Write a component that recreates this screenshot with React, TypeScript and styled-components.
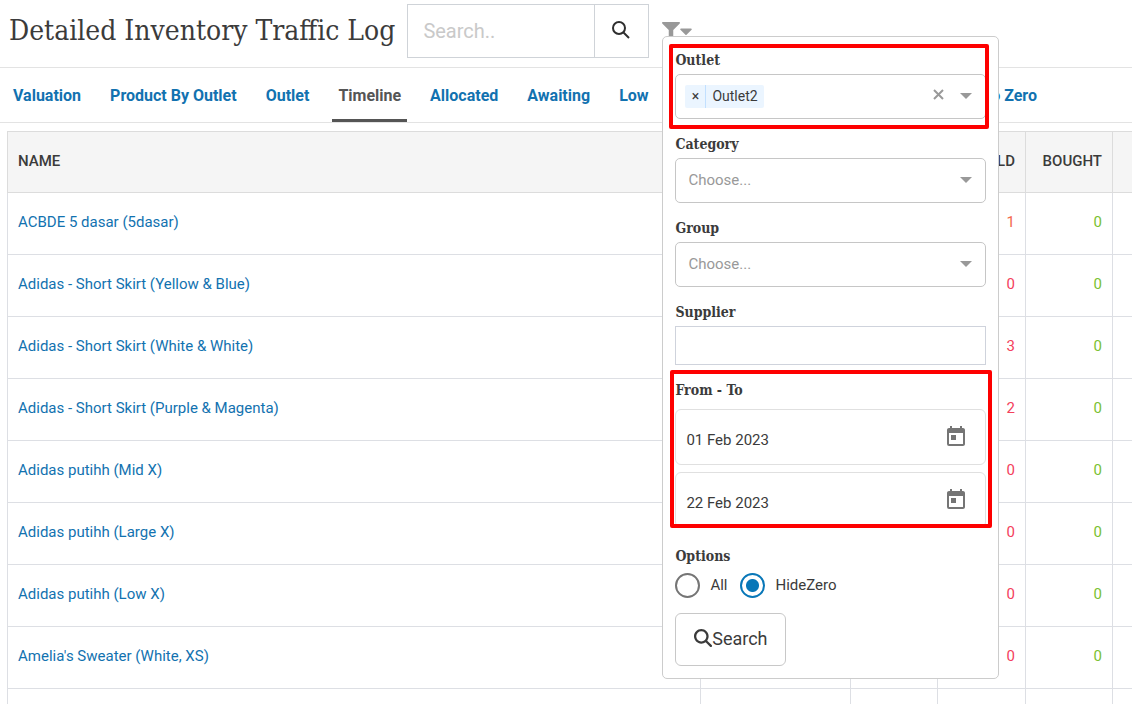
import React from "react";
import styled, { createGlobalStyle, css } from "styled-components";
import { FaFilter, FaCaretDown } from "react-icons/fa";
import { FaMagnifyingGlass } from "react-icons/fa6";
import { MdToday } from "react-icons/md";

const sans = `Roboto, "Liberation Sans", sans-serif`;
const slab = `"Roboto Slab", "DejaVu Serif Condensed", "DejaVu Serif", serif`;

const GlobalStyle = createGlobalStyle`
  *, *::before, *::after { box-sizing: border-box; }
  body { margin: 0; background: #fff; color: #3b3b3b; font-family: ${sans}; font-size: 15px; }
  button, input, select { font: inherit; color: inherit; margin: 0; }
  button { cursor: pointer; }
  a { text-decoration: none; }
`;

const Page = styled.div`
  height: 100vh;
  overflow: hidden;
`;

const Header = styled.header`
  display: flex;
  align-items: center;
  height: 68px;
  padding: 0 9px 6px;
  border-bottom: 1px solid #e3e3e3;
`;

const Title = styled.h1`
  margin: 0 12px 0 0;
  font-family: ${slab};
  font-size: 28px;
  line-height: 36px;
  font-weight: 400;
  white-space: nowrap;
`;

const SearchBox = styled.form`
  display: flex;
  height: 54px;
  flex: none;
  border: 1px solid #cfd3d8;
`;

const SearchInput = styled.input`
  width: 186px;
  padding: 0 15px;
  border: 0;
  outline: 0;
  font-size: 20px;
  &::placeholder { color: #c9c9c9; opacity: 1; }
`;

const SearchSubmit = styled.button`
  display: flex;
  align-items: center;
  justify-content: center;
  width: 54px;
  padding: 0 2px 2px 0;
  border: 0;
  border-left: 1px solid #cfd3d8;
  background: #fff;
  color: #2e2e2e;
`;

const FilterMenu = styled.div`
  position: relative;
  margin-left: 13px;
`;

const FilterToggle = styled.button`
  display: flex;
  align-items: center;
  padding: 0;
  border: 0;
  background: none;
  color: #999;
  font-size: 18px;
`;

const ToggleCaret = styled(FaCaretDown)`
  margin-left: -4px;
  font-size: 20px;
`;

const Popup = styled.form`
  position: absolute;
  z-index: 2;
  top: 15px;
  left: 0;
  width: 337px;
  padding: 11px 12px 12px;
  border: 1px solid #ccc;
  border-radius: 5px;
  background: #fff;
`;

const Group = styled.div<{ $space?: number; $mark?: string }>`
  position: relative;
  margin-bottom: ${(p) => p.$space ?? 13}px;
  ${(p) =>
    p.$mark &&
    css`
      &::after {
        content: "";
        position: absolute;
        inset: ${p.$mark};
        border: 4px solid #fe0000;
        border-radius: 2px;
        pointer-events: none;
      }
    `}
`;

const labelText = css`
  display: block;
  font-family: ${slab};
  font-size: 14px;
  line-height: 24px;
  font-weight: 700;
`;
const Label = styled.label`${labelText}`;
const GroupTitle = styled.div`${labelText}`;

const SelectFrame = styled.div`
  display: flex;
  align-items: center;
  position: relative;
  height: 45px;
  margin-top: 2px;
  border: 1px solid #c6c6c6;
  border-radius: 5px;
`;

const Select = styled.select`
  appearance: none;
  width: 100%;
  height: 100%;
  padding: 0 40px 0 12px;
  border: 0;
  outline: 0;
  background: none;
  color: #999;
`;

const Arrow = styled.svg`
  position: absolute;
  right: 13px;
  top: 18px;
  width: 12px;
  height: 6px;
  fill: #999;
  pointer-events: none;
`;

const Chip = styled.span`
  display: flex;
  height: 23px;
  margin-left: 9px;
  border-radius: 2px;
  background: #ebf5ff;
  font-size: 14px;
  line-height: 23px;
`;

const ChipRemove = styled.button`
  width: 21px;
  padding: 0;
  border: 0;
  border-right: 1px solid #c2e0ff;
  background: none;
`;

const ChipText = styled.span`
  padding: 0 6px;
`;

const ClearButton = styled.button`
  display: flex;
  margin: 0 41px 4px auto;
  padding: 0;
  border: 0;
  background: none;
  color: #999;
`;

const TextInput = styled.input`
  display: block;
  width: 100%;
  height: 39px;
  margin-top: 2px;
  padding: 0 10px;
  border: 1px solid #cfd3dc;
  outline: 0;
`;

const DateField = styled.div`
  display: flex;
  align-items: center;
  height: 56px;
  margin-top: 7px;
  padding: 0 17px 0 10px;
  border: 1px solid #e0e0e0;
  border-radius: 6px;
`;

const DateInput = styled.input`
  flex: 1;
  min-width: 0;
  padding: 6px 0 0;
  border: 0;
  outline: 0;
`;

const CalendarButton = styled.button`
  display: flex;
  padding: 0;
  border: 0;
  background: none;
  color: #757575;
  font-size: 24px;
`;

const Radios = styled.div`
  display: flex;
  align-items: center;
  height: 25px;
  margin-top: 5px;
`;

const Radio = styled.input`
  appearance: none;
  width: 25px;
  height: 25px;
  margin: 0 10px 0 0;
  border: 2px solid #757575;
  border-radius: 50%;
  &:checked {
    border-color: #0877b8;
    background: radial-gradient(circle, #0877b8 6px, transparent 7px);
  }
`;

const RadioLabel = styled.label`
  display: flex;
  align-items: center;
  margin-right: 13px;
`;

const SearchButton = styled.button`
  display: flex;
  align-items: center;
  justify-content: center;
  width: 111px;
  height: 53px;
  padding: 0 0 2px;
  border: 1px solid #c8c8c8;
  border-radius: 6px;
  background: #fff;
  font-size: 18px;
`;

const Tabs = styled.nav`
  display: flex;
  gap: 17px;
  height: 55px;
  padding: 0 89px 0 7px;
  border-bottom: 1px solid #e3e3e3;
  white-space: nowrap;
`;

const Tab = styled.a<{ $active?: boolean }>`
  padding: 0 6px;
  border-bottom: 3px solid ${(p) => (p.$active ? "#555" : "transparent")};
  color: ${(p) => (p.$active ? "#555" : "#1272b0")};
  font-size: 16px;
  line-height: 55px;
  font-weight: 700;
  &:last-child { margin-left: auto; }
`;

const TableArea = styled.main`
  padding: 8px 0 0 7px;
  overflow: hidden;
`;

const Table = styled.table`
  width: calc(100% + 69px);
  table-layout: fixed;
  border-collapse: collapse;
`;

const Col = styled.col<{ $width?: number }>`
  width: ${(p) => (p.$width ? `${p.$width}px` : "auto")};
`;

const HeadCell = styled.th<{ $right?: boolean }>`
  height: 61px;
  padding: 0 10px 2px;
  border: 1px solid #dcdcdc;
  background: #f5f5f5;
  font-size: 15px;
  font-weight: 500;
  text-align: ${(p) => (p.$right ? "right" : "left")};
`;

const Cell = styled.td<{ $color?: string }>`
  height: 62px;
  padding: 0 10px 3px;
  border: 1px solid #dddfe4;
  color: ${(p) => p.$color ?? "inherit"};
  text-align: right;
  &:first-child { text-align: left; }
`;

const ProductLink = styled.a`
  color: #1272b0;
`;

const tabs = ["Valuation", "Product By Outlet", "Outlet", "Timeline", "Allocated", "Awaiting", "Low", "To Zero"];

const rows: [string, number][] = [
  ["ACBDE 5 dasar (5dasar)", 1],
  ["Adidas - Short Skirt (Yellow & Blue)", 0],
  ["Adidas - Short Skirt (White & White)", 3],
  ["Adidas - Short Skirt (Purple & Magenta)", 2],
  ["Adidas putihh (Mid X)", 0],
  ["Adidas putihh (Large X)", 0],
  ["Adidas putihh (Low X)", 0],
  ["Amelia's Sweater (White, XS)", 0],
  ["", 0],
];

const DropArrow = () => (
  <Arrow viewBox="0 0 12 6" aria-hidden="true">
    <path d="M0 0h12L6 6z" />
  </Arrow>
);

const ChooseField = ({ id, label }: { id: string; label: string }) => (
  <Group>
    <Label htmlFor={id}>{label}</Label>
    <SelectFrame>
      <Select id={id} defaultValue="">
        <option value="">Choose...</option>
      </Select>
      <DropArrow />
    </SelectFrame>
  </Group>
);

const DatePick = ({ label, value }: { label: string; value: string }) => (
  <DateField>
    <DateInput aria-label={label} defaultValue={value} />
    <CalendarButton type="button" aria-label={`${label} calendar`}>
      <MdToday />
    </CalendarButton>
  </DateField>
);

const FilterForm = () => (
  <Popup>
    <Group $mark="-4px -3px -10px -6px" role="group" aria-labelledby="outlet-label">
      <GroupTitle id="outlet-label">Outlet</GroupTitle>
      <SelectFrame>
        <Chip>
          <ChipRemove type="button" aria-label="Remove Outlet2">×</ChipRemove>
          <ChipText>Outlet2</ChipText>
        </Chip>
        <ClearButton type="button" aria-label="Clear outlets">
          <svg width="11" height="11" viewBox="0 0 11 11" stroke="currentColor" strokeWidth="2" aria-hidden="true">
            <path d="M1 1l9 9M10 1l-9 9" />
          </svg>
        </ClearButton>
        <DropArrow />
      </SelectFrame>
    </Group>
    <ChooseField id="category" label="Category" />
    <ChooseField id="group" label="Group" />
    <Group>
      <Label htmlFor="supplier">Supplier</Label>
      <TextInput id="supplier" />
    </Group>
    <Group $space={16} $mark="-8px -6px 0 -5px" role="group" aria-labelledby="range-label">
      <GroupTitle id="range-label">From - To</GroupTitle>
      <DatePick label="From" value="01 Feb 2023" />
      <DatePick label="To" value="22 Feb 2023" />
    </Group>
    <Group $space={15} role="radiogroup" aria-labelledby="options-label">
      <GroupTitle id="options-label">Options</GroupTitle>
      <Radios>
        <RadioLabel>
          <Radio type="radio" name="options" />
          All
        </RadioLabel>
        <RadioLabel>
          <Radio type="radio" name="options" defaultChecked />
          HideZero
        </RadioLabel>
      </Radios>
    </Group>
    <SearchButton type="button">
      <FaMagnifyingGlass />
      Search
    </SearchButton>
  </Popup>
);

export default function App() {
  return (
    <Page>
      <GlobalStyle />
      <Header>
        <Title>Detailed Inventory Traffic Log</Title>
        <SearchBox>
          <SearchInput aria-label="Search" placeholder="Search.." />
          <SearchSubmit type="button" aria-label="Search">
            <svg width="18" height="18" viewBox="0 0 18 18" fill="none" stroke="currentColor" strokeWidth="2" aria-hidden="true">
              <circle cx="7" cy="7" r="6" />
              <path d="M11 11l6 6" />
            </svg>
          </SearchSubmit>
        </SearchBox>
        <FilterMenu>
          <FilterToggle type="button" aria-label="Filter" aria-expanded="true">
            <FaFilter />
            <ToggleCaret />
          </FilterToggle>
          <FilterForm />
        </FilterMenu>
      </Header>
      <Tabs>
        {tabs.map((tab) => (
          <Tab key={tab} href="#" $active={tab === "Timeline"}>{tab}</Tab>
        ))}
      </Tabs>
      <TableArea>
        <Table>
          <colgroup>
            <Col />
            <Col $width={150} />
            <Col $width={87} />
            <Col $width={88} />
            <Col $width={87} />
            <Col $width={88} />
          </colgroup>
          <thead>
            <tr>
              <HeadCell>NAME</HeadCell>
              <HeadCell />
              <HeadCell />
              <HeadCell $right>SOLD</HeadCell>
              <HeadCell $right>BOUGHT</HeadCell>
              <HeadCell />
            </tr>
          </thead>
          <tbody>
            {rows.map(([name, sold], i) => (
              <tr key={i}>
                <Cell><ProductLink href="#">{name}</ProductLink></Cell>
                <Cell />
                <Cell />
                <Cell $color={sold === 1 ? "#f4694c" : "#f4405c"}>{name && sold}</Cell>
                <Cell $color="#7ac131">{name && 0}</Cell>
                <Cell />
              </tr>
            ))}
          </tbody>
        </Table>
      </TableArea>
    </Page>
  );
}
